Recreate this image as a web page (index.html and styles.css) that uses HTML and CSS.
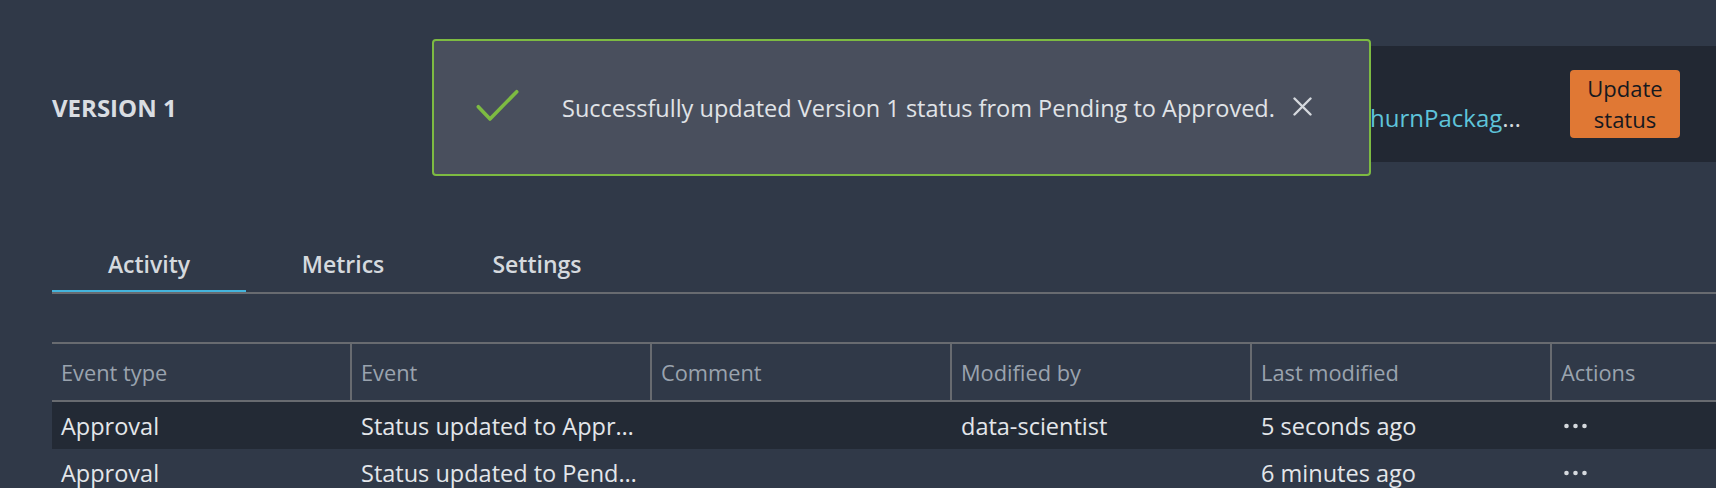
FILE: index.html
```html
<!DOCTYPE html>
<html lang="en">
<head>
<meta charset="utf-8">
<title>Version 1</title>
<link rel="stylesheet" href="styles.css">
</head>
<body>
<main class="page">
  <header class="version-header">
    <h1 class="version-title">VERSION 1</h1>
    <div class="version-meta">
      <span class="meta-value"><a class="meta-link" href="#">ChurnPackag</a>…</span>
      <button class="update-btn" type="button">Update status</button>
    </div>
  </header>

  <nav class="tabs">
    <a class="tab tab-active" href="#">Activity</a>
    <a class="tab" href="#">Metrics</a>
    <a class="tab" href="#">Settings</a>
  </nav>

  <div class="table">
    <div class="row row-head">
      <div class="cell">Event type</div>
      <div class="cell">Event</div>
      <div class="cell">Comment</div>
      <div class="cell">Modified by</div>
      <div class="cell">Last modified</div>
      <div class="cell">Actions</div>
    </div>
    <div class="row row-body row-selected">
      <div class="cell">Approval</div>
      <div class="cell">Status updated to Appr…</div>
      <div class="cell"></div>
      <div class="cell">data-scientist</div>
      <div class="cell">5 seconds ago</div>
      <div class="cell"><svg class="dots" width="24" height="6" viewBox="0 0 24 6"><circle cx="2.5" cy="3" r="2.3"/><circle cx="11.5" cy="3" r="2.3"/><circle cx="20.5" cy="3" r="2.3"/></svg></div>
    </div>
    <div class="row row-body">
      <div class="cell">Approval</div>
      <div class="cell">Status updated to Pend…</div>
      <div class="cell"></div>
      <div class="cell"></div>
      <div class="cell">6 minutes ago</div>
      <div class="cell"><svg class="dots" width="24" height="6" viewBox="0 0 24 6"><circle cx="2.5" cy="3" r="2.3"/><circle cx="11.5" cy="3" r="2.3"/><circle cx="20.5" cy="3" r="2.3"/></svg></div>
    </div>
  </div>
</main>

<div class="toast" role="status">
  <svg class="toast-check" width="43" height="33" viewBox="0 0 43 33"><polyline points="2.3,17.7 14,30 40.7,2.7"/></svg>
  <span class="toast-text">Successfully updated Version 1 status from Pending to Approved.</span>
  <svg class="toast-close" width="19" height="19" viewBox="0 0 19 19"><path d="M1.5 1.5 L17.5 17.5 M17.5 1.5 L1.5 17.5"/></svg>
</div>
</body>
</html>
```

FILE: styles.css
```css
html, body {
  margin: 0;
  padding: 0;
}

body {
  width: 1716px;
  height: 488px;
  overflow: hidden;
  background: #303948;
  font-family: "Open Sans", "Noto Sans", sans-serif;
  color: #e1e4e8;
}

.page {
  padding-left: 52px;
}

/* ---------- header ---------- */
.version-header {
  display: flex;
  align-items: flex-start;
  margin-top: 46px;
  height: 116px;
}

.version-title {
  margin: 46px 0 0 0;
  font-size: 24px;
  line-height: 32px;
  font-weight: 700;
  color: #d9dde2;
}

.version-meta {
  margin-left: auto;
  align-self: stretch;
  display: flex;
  align-items: center;
  gap: 49px;
  width: 620px;
  box-sizing: border-box;
  justify-content: flex-end;
  padding: 0 36px 0 24px;
  background: #222833;
}

.meta-value {
  margin-top: 28px;
  font-size: 24px;
  line-height: 32px;
  color: #d5d9de;
  white-space: nowrap;
}

.meta-link {
  color: #5ec4da;
  text-decoration: none;
}

.update-btn {
  width: 110px;
  height: 68px;
  padding: 3px 8px;
  border: none;
  border-radius: 4px;
  background: #e07834;
  color: #16191f;
  font-family: inherit;
  font-size: 22px;
  line-height: 31px;
  text-align: center;
}

/* ---------- tabs ---------- */
.tabs {
  display: flex;
  margin-top: 74px;
  border-bottom: 2px solid #686b70;
}

.tab {
  width: 194px;
  height: 56px;
  display: flex;
  align-items: center;
  justify-content: center;
  font-size: 23px;
  font-weight: 600;
  color: #d5d9de;
  text-decoration: none;
}

.tab-active {
  box-shadow: inset 0 -2px 0 #44b4dc;
}

/* ---------- table ---------- */
.table {
  margin-top: 48px;
  width: 1798px;
}

.row {
  display: grid;
  grid-template-columns: 298px repeat(5, 300px);
}

.cell {
  box-sizing: border-box;
  display: flex;
  align-items: center;
  padding: 0 9px;
  white-space: nowrap;
  overflow: hidden;
}

.cell + .cell {
  border-left: 2px solid transparent;
}

.row-head {
  border-top: 2px solid #686b70;
  border-bottom: 2px solid #686b70;
}

.row-head .cell {
  height: 56px;
  font-size: 21.8px;
  color: #9aa3ae;
}

.row-head .cell + .cell {
  border-left-color: #686b70;
}

.row-body .cell {
  height: 47px;
  font-size: 23.5px;
  color: #e3e6ea;
}

.row-selected {
  background: #232a35;
}

.dots {
  fill: #d5d9de;
  margin-left: 3px;
}

/* ---------- toast (overlay) ---------- */
.toast {
  position: absolute;
  left: 432px;
  top: 39px;
  width: 939px;
  height: 137px;
  box-sizing: border-box;
  display: flex;
  align-items: center;
  padding-left: 42px;
  border: 2px solid #7dbb42;
  border-radius: 4px;
  background: #494f5d;
}

.toast-check {
  flex: none;
  margin-top: -4px;
  fill: none;
  stroke: #7dbb42;
  stroke-width: 3.6;
  stroke-linecap: round;
  stroke-linejoin: round;
}

.toast-text {
  margin-left: 43px;
  font-size: 23.5px;
  line-height: 32px;
  color: #e0e3e7;
  white-space: nowrap;
}

.toast-close {
  flex: none;
  margin-left: 18px;
  margin-top: -2px;
  fill: none;
  stroke: #d5d9de;
  stroke-width: 2.4;
  stroke-linecap: round;
}
```
